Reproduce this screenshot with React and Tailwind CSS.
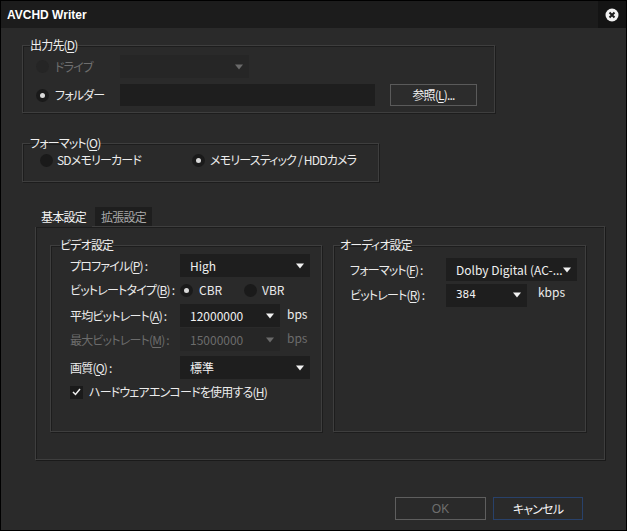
import React from 'react'

const Arrow = ({ dim }) => (
  <svg width="8" height="6" viewBox="0 0 8 6" className="shrink-0">
    <path d="M0 0.5 L8 0.5 L4 5.5 Z" fill={dim ? '#6a6a6a' : '#f2f2f2'} />
  </svg>
)

const Combo = ({ value, w, dim, mono }) => (
  <div
    className={`${w} h-[23px] shrink-0 flex items-center justify-between pl-[10px] pr-[6px] tracking-normal ${dim ? 'bg-[#262626] text-[#6c6c6c]' : 'bg-[#1e1e1e] text-[#f0f0f0]'}`}
  >
    <span className={`whitespace-nowrap ${mono ? "font-['DejaVu_Sans_Mono',monospace] text-[11px]" : ''}`}>{value}</span>
    <Arrow dim={dim} />
  </div>
)

const Radio = ({ on, dim }) => (
  <span className={`w-[13px] h-[13px] rounded-full flex items-center justify-center shrink-0 ${dim ? 'bg-[#252525]' : 'bg-[#1a1a1a]'}`}>
    {on && <span className="w-[5px] h-[5px] rounded-full bg-[#d8d8d8]" />}
  </span>
)

const Group = ({ label, className, legend, children }) => (
  <fieldset className={`border border-[#3e3e3e] shadow-[inset_1px_1px_0_#1d1d1d,1px_1px_0_#1d1d1d] ${className}`}>
    <legend className={`${legend} px-0 h-[16px] leading-[16px] text-[#f0f0f0] whitespace-nowrap`}>{label}</legend>
    {children}
  </fieldset>
)

const U = ({ children }) => <span className="underline underline-offset-2">{children}</span>

export default function App() {
  return (
    <div className="w-[627px] h-[531px] bg-[#2a2a2a] border border-black flex flex-col text-[12px] leading-[16px] tracking-[-0.8px] text-[#ececec] font-['Noto_Sans_CJK_JP','Noto_Sans',sans-serif] [font-feature-settings:'palt'] overflow-hidden">
      {/* title bar */}
      <div className="h-[27px] bg-[#1c1c1c] flex items-center justify-between shrink-0">
        <span className="pl-[6px] font-bold text-[12px] tracking-normal text-white font-['Liberation_Sans','Noto_Sans_CJK_JP',sans-serif]">AVCHD Writer</span>
        <div className="w-[28px] h-[27px] bg-[#141414] flex items-center justify-center">
          <svg width="14" height="14" viewBox="0 0 14 14">
            <circle cx="7" cy="7" r="6.5" fill="#f2f2f2" />
            <path d="M4.5 4.5 L9.5 9.5 M9.5 4.5 L4.5 9.5" stroke="#1c1c1c" strokeWidth="2" />
          </svg>
        </div>
      </div>

      <div className="flex flex-col px-[21px] pt-[9px]">
        {/* 出力先 */}
        <Group label={<>出力先(<U>D</U>)</>} legend="-ml-[6px]" className="w-[473px] h-[76px] pl-[13px] pr-[17px] pt-[2px]">
          <div className="flex flex-col gap-[6px]">
            <div className="flex items-center h-[23px]">
              <div className="w-[84px] flex items-center gap-[6px] text-[#6e6e6e]">
                <Radio dim />
                <span>ドライブ</span>
              </div>
              <Combo value="" w="w-[129px]" dim />
            </div>
            <div className="flex items-center h-[22px]">
              <div className="w-[84px] flex items-center gap-[6px]">
                <Radio on />
                <span>フォルダー</span>
              </div>
              <div className="w-[255px] h-[22px] bg-[#1e1e1e]" />
              <button className="ml-[15px] w-[87px] h-[22px] border border-[#5a5a5a] bg-[#2c2c2c] text-[#f0f0f0]">
                参照(<U>L</U>)...
              </button>
            </div>
          </div>
        </Group>

        {/* フォーマット */}
        <Group label={<>フォーマット(<U>O</U>)</>} legend="-ml-[10px]" className="mt-[22px] w-[357px] h-[47px] pl-[17px]">
          <div className="flex items-center h-[18px]">
            <div className="w-[152px] flex items-center gap-[4px]">
              <Radio />
              <span className="whitespace-nowrap">SDメモリーカード</span>
            </div>
            <div className="flex items-center gap-[5px]">
              <Radio on />
              <span className="whitespace-nowrap">メモリースティック / HDDカメラ</span>
            </div>
          </div>
        </Group>

        {/* tabs */}
        <div className="mt-[24px] ml-[13px] flex items-end h-[20px]">
          <div className="w-[57px] h-[20px] flex items-center justify-center bg-[#2a2a2a] text-[#f4f4f4] relative z-10 -mb-px">基本設定</div>
          <div className="ml-[3px] w-[57px] h-[19px] flex items-center justify-center bg-[#1e1e1e] text-[#a8a8a8]">拡張設定</div>
        </div>
        <div className="ml-[13px] w-[570px] h-[234px] shrink-0 border border-[#3e3e3e] shadow-[inset_1px_1px_0_#1d1d1d,1px_1px_0_#1a1a1a] flex gap-[11px] pl-[14px] pt-[10px]">
          {/* ビデオ設定 */}
          <Group label="ビデオ設定" legend="-ml-[10px]" className="w-[272px] h-[195px] pl-[19px]">
            <div className="flex flex-col whitespace-nowrap">
              <div className="mt-[1px] flex items-center h-[23px]">
                <span className="w-[110px]">プロファイル(<U>P</U>) :</span>
                <Combo value="High" w="w-[130px]" />
              </div>
              <div className="mt-[2px] flex items-center h-[22px]">
                <span className="w-[110px]">ビットレートタイプ(<U>B</U>) :</span>
                <div className="w-[64px] flex items-center gap-[6px] tracking-normal">
                  <Radio on />
                  <span>CBR</span>
                </div>
                <div className="flex items-center gap-[5px] tracking-normal">
                  <Radio />
                  <span>VBR</span>
                </div>
              </div>
              <div className="mt-[3px] flex items-center h-[23px]">
                <span className="w-[110px]">平均ビットレート(<U>A</U>) :</span>
                <Combo value="12000000" w="w-[100px]" />
                <span className="ml-[7px] -mt-[4px] tracking-normal">bps</span>
              </div>
              <div className="mt-[1px] flex items-center h-[23px] text-[#6c6c6c]">
                <span className="w-[110px]">最大ビットレート(<U>M</U>) :</span>
                <Combo value="15000000" w="w-[100px]" dim />
                <span className="ml-[7px] -mt-[4px] tracking-normal">bps</span>
              </div>
              <div className="mt-[5px] flex items-center h-[23px]">
                <span className="w-[110px]">画質(<U>Q</U>) :</span>
                <Combo value="標準" w="w-[130px]" />
              </div>
              <div className="mt-[4px] flex items-center h-[18px] gap-[6px]">
                <span className="w-[13px] h-[13px] bg-[#1a1a1a] flex items-center justify-center">
                  <svg width="9" height="8" viewBox="0 0 9 8">
                    <path d="M1 4 L3.5 6.5 L8 1" stroke="#f0f0f0" strokeWidth="1.5" fill="none" />
                  </svg>
                </span>
                <span>ハードウェアエンコードを使用する(<U>H</U>)</span>
              </div>
            </div>
          </Group>

          {/* オーディオ設定 */}
          <Group label="オーディオ設定" legend="-ml-[10px]" className="w-[253px] h-[195px] pl-[16px]">
            <div className="flex flex-col whitespace-nowrap">
              <div className="mt-[5px] flex items-center h-[23px]">
                <span className="w-[96px]">フォーマット(<U>F</U>) :</span>
                <Combo value="Dolby Digital (AC-..." w="w-[131px]" />
              </div>
              <div className="mt-[3px] flex items-center h-[22px]">
                <span className="w-[96px]">ビットレート(<U>R</U>) :</span>
                <Combo value="384" w="w-[81px]" mono />
                <span className="ml-[11px] -mt-[6px] tracking-normal">kbps</span>
              </div>
            </div>
          </Group>
        </div>

        {/* buttons */}
        <div className="mt-[37px] flex justify-end gap-[7px] pr-[22px]">
          <button className="w-[91px] h-[23px] border border-[#5e5e5e] text-[#6e6e6e] tracking-normal font-['Liberation_Sans',sans-serif]">OK</button>
          <button className="w-[90px] h-[23px] border border-[#28416a] text-[#f4f4f4]">キャンセル</button>
        </div>
      </div>
    </div>
  )
}
